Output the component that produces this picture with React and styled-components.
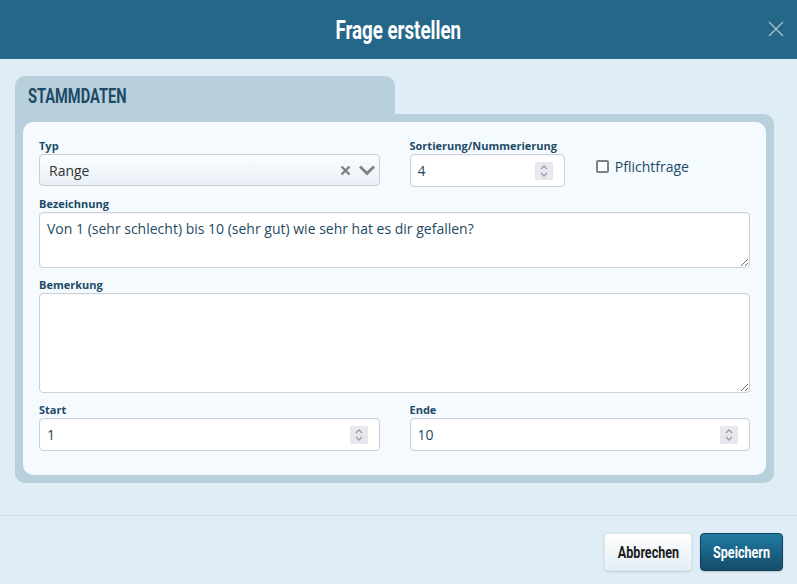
import React from "react";
import styled, { createGlobalStyle } from "styled-components";

const Global = createGlobalStyle`
  html, body { margin: 0; padding: 0; }
  body { font-family: "Open Sans", "Noto Sans", sans-serif; background: #dfedf6; }
  * { box-sizing: border-box; }
`;

const Modal = styled.div`
  display: flex;
  flex-direction: column;
  width: 797px;
  height: 584px;
  overflow: hidden;
  background: #dfedf6;
`;

const Header = styled.header`
  flex-shrink: 0;
  height: 59px;
  background: #246789;
  display: flex;
  align-items: center;
  justify-content: center;
  position: relative;
`;

const Narrow = styled.span`
  display: inline-block;
  font-family: Roboto, "Open Sans", sans-serif;
  font-weight: 700;
  white-space: nowrap;
  transform: scaleX(${(p) => p.$s || 0.72});
  transform-origin: ${(p) => p.$origin || "center"};
`;

const Title = styled.h1`
  margin: 0;
  color: #fff;
  font-size: 26px;
  line-height: 30px;
  font-weight: 700;
`;

const Close = styled.button`
  position: absolute;
  right: 13px;
  top: 21px;
  width: 16px;
  height: 16px;
  padding: 0;
  border: 0;
  background: none;
  display: flex;
`;

const Body = styled.main`
  flex: 1;
  min-height: 0;
  padding: 17px 23px 0 15px;
`;

const Tab = styled.div`
  width: 380px;
  height: 38px;
  background: #b8cfdc;
  border-radius: 10px 10px 0 0;
  padding: 8px 13px 0;
  color: #1d4a66;
  font-size: 20px;
  line-height: 24px;
`;

const Panel = styled.section`
  background: #b8cfdc;
  border-radius: 0 10px 10px 10px;
  padding: 8px;
`;

const Card = styled.div`
  background: #f5faff;
  border-radius: 10px;
  padding: 17px 16px 24px;
  display: grid;
  grid-template-columns: repeat(4, minmax(0, 1fr));
  column-gap: 30px;
  row-gap: 10px;
`;

const Field = styled.div`
  grid-column: span ${(p) => p.$span || 1};
  display: flex;
  flex-direction: column;
  min-width: 0;
`;

const Label = styled.label`
  font-size: 11px;
  font-weight: 700;
  line-height: 14px;
  height: 15px;
  color: #1d4a66;
  white-space: nowrap;
`;

const Select = styled.div`
  height: 32px;
  border: 1px solid #c9ced6;
  border-radius: 4px;
  background: linear-gradient(#fbfdff, #e9f0f6);
  display: flex;
  align-items: center;
  padding: 0 0 0 9px;
  color: #333;
  font-size: 14px;
`;

const SelectValue = styled.span`
  flex: 1;
`;

const SelectIcons = styled.span`
  display: flex;
  align-items: center;
  gap: 6px;
  padding-right: 2px;
`;

const InputBox = styled.div`
  height: 33px;
  border: 1px solid #cbd0d8;
  border-radius: 4px;
  background: #fff;
  display: flex;
  align-items: center;
  padding: 0 11px 0 7px;
  box-shadow: inset 0 1px 2px rgba(0, 0, 0, 0.04);
`;

const Input = styled.input`
  flex: 1;
  width: 0;
  min-width: 0;
  border: 0;
  outline: none;
  background: transparent;
  font-family: "Open Sans", sans-serif;
  font-size: 14px;
  color: #1f4a62;
  padding: 0;
`;

const Spinner = styled.span`
  width: 18px;
  height: 18px;
  background: #e7e8ee;
  display: flex;
  align-items: center;
  justify-content: center;
`;

const CheckRow = styled.div`
  grid-column: span 1;
  display: flex;
  align-items: center;
  gap: 6px;
  padding: 18px 0 0 1px;
  align-self: start;
  color: #1d4a66;
  font-size: 14px;
`;

const Box = styled.span`
  width: 13px;
  height: 13px;
  border: 2px solid #7d818b;
  border-radius: 2px;
  background: #fff;
`;

const TextArea = styled.textarea`
  height: ${(p) => p.$h}px;
  border: 1px solid #cbd0d8;
  border-radius: 4px;
  background: #fff;
  resize: vertical;
  padding: 6px 7px;
  font-family: "Open Sans", sans-serif;
  font-size: 14px;
  line-height: 20px;
  color: #1f4a62;
  outline: none;
  box-shadow: inset 0 1px 2px rgba(0, 0, 0, 0.04);
`;

const Footer = styled.footer`
  flex-shrink: 0;
  border-top: 1px solid #cddde8;
  height: 69px;
  display: flex;
  justify-content: flex-end;
  align-items: flex-start;
  gap: 8px;
  padding: 17px 14px 0;
`;

const Button = styled.button`
  width: ${(p) => p.$w}px;
  height: 38px;
  padding: 0;
  border-radius: 4px;
  font-size: 17px;
  cursor: pointer;
  display: flex;
  align-items: center;
  justify-content: center;
  border: 1px solid ${(p) => (p.$primary ? "#123f57" : "#dbe5ec")};
  color: ${(p) => (p.$primary ? "#fff" : "#1b1b1b")};
  background: ${(p) =>
    p.$primary
      ? "linear-gradient(#1f7aa2, #154c6a)"
      : "linear-gradient(#ffffff, #e4eef5)"};
  box-shadow: 0 1px 2px rgba(0, 0, 0, 0.15);
`;

const SpinIcon = () => (
  <svg width="10" height="14" viewBox="0 0 10 14" fill="none" stroke="#9a9ba6" strokeWidth="1.3">
    <path d="M2 5l3-3 3 3" />
    <path d="M2 9l3 3 3-3" />
  </svg>
);

const NumberField = ({ label, value, span }) => (
  <Field $span={span}>
    <Label>{label}</Label>
    <InputBox>
      <Input defaultValue={value} />
      <Spinner>
        <SpinIcon />
      </Spinner>
    </InputBox>
  </Field>
);

export default function App() {
  return (
    <>
      <Global />
      <Modal>
        <Header>
          <Title>
            <Narrow $s={0.72}>Frage erstellen</Narrow>
          </Title>
          <Close aria-label="close">
            <svg width="16" height="16" viewBox="0 0 16 16" stroke="#a4bfcf" strokeWidth="1.4">
              <path d="M1 1l14 14M15 1L1 15" />
            </svg>
          </Close>
        </Header>
        <Body>
          <Tab>
            <Narrow $s={0.73} $origin="left">STAMMDATEN</Narrow>
          </Tab>
          <Panel>
            <Card>
              <Field $span={2}>
                <Label>Typ</Label>
                <Select>
                  <SelectValue>Range</SelectValue>
                  <SelectIcons>
                    <svg width="11" height="11" viewBox="0 0 11 11" stroke="#7c8189" strokeWidth="2.4">
                      <path d="M1.5 1.5l8 8M9.5 1.5l-8 8" />
                    </svg>
                    <svg width="20" height="20" viewBox="0 0 20 20" fill="none" stroke="#7c8189" strokeWidth="2.8">
                      <path d="M3 6.5l7 7 7-7" />
                    </svg>
                  </SelectIcons>
                </Select>
              </Field>
              <NumberField label="Sortierung/Nummerierung" value="4" />
              <CheckRow>
                <Box />
                Pflichtfrage
              </CheckRow>
              <Field $span={4}>
                <Label>Bezeichnung</Label>
                <TextArea
                  $h={56}
                  defaultValue="Von 1 (sehr schlecht) bis 10 (sehr gut) wie sehr hat es dir gefallen?"
                />
              </Field>
              <Field $span={4}>
                <Label>Bemerkung</Label>
                <TextArea $h={100} defaultValue="" />
              </Field>
              <NumberField label="Start" value="1" span={2} />
              <NumberField label="Ende" value="10" span={2} />
            </Card>
          </Panel>
        </Body>
        <Footer>
          <Button $w={88}>
            <Narrow $s={0.74}>Abbrechen</Narrow>
          </Button>
          <Button $w={83} $primary>
            <Narrow $s={0.74}>Speichern</Narrow>
          </Button>
        </Footer>
      </Modal>
    </>
  );
}
